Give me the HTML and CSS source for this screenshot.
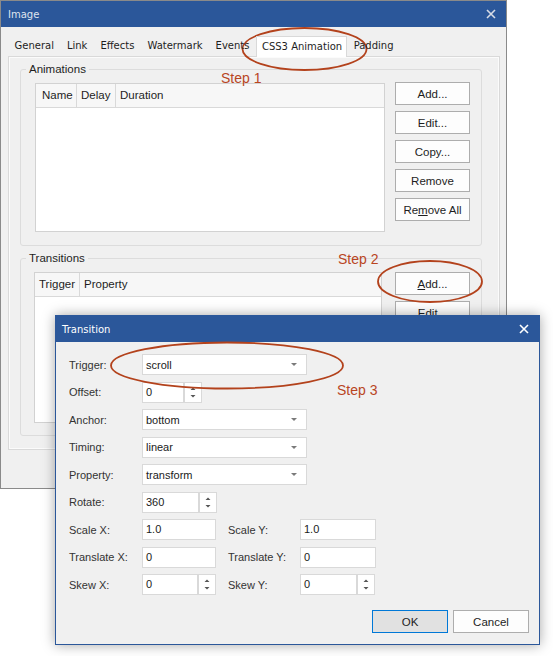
FILE: index.html
```html
<!DOCTYPE html>
<html>
<head>
<meta charset="utf-8">
<link rel="stylesheet" href="styles.css">
</head>
<body>
<div class="desktop">
  <section class="win win-image">
    <header class="titlebar">
      <span class="title">Image</span>
      <svg class="close" width="10" height="10" viewBox="0 0 10 10"><path d="M1 1 L9 9 M9 1 L1 9"/></svg>
    </header>
    <div class="img-body">
      <nav class="tabs">
        <span class="tab">General</span>
        <span class="tab">Link</span>
        <span class="tab">Effects</span>
        <span class="tab">Watermark</span>
        <span class="tab">Events</span>
        <span class="tab active">CSS3 Animation</span>
        <span class="tab">Padding</span>
      </nav>
      <div class="tabpanel">
        <fieldset class="group group-anim">
          <legend>Animations</legend>
          <div class="group-row">
            <div class="listview lv-anim">
              <div class="lv-head">
                <span class="col col-name">Name</span>
                <span class="col col-delay">Delay</span>
                <span class="col col-dur">Duration</span>
              </div>
              <div class="lv-body"></div>
            </div>
            <div class="btncol">
              <button class="btn">Add...</button>
              <button class="btn">Edit...</button>
              <button class="btn">Copy...</button>
              <button class="btn">Remove</button>
              <button class="btn">Re<u>m</u>ove All</button>
            </div>
          </div>
        </fieldset>
        <fieldset class="group group-trans">
          <legend>Transitions</legend>
          <div class="group-row">
            <div class="listview lv-trans">
              <div class="lv-head">
                <span class="col col-trig">Trigger</span>
                <span class="col col-prop">Property</span>
              </div>
              <div class="lv-body"></div>
            </div>
            <div class="btncol">
              <button class="btn"><u>A</u>dd...</button>
              <button class="btn">Edit...</button>
              <button class="btn">Remove</button>
              <button class="btn">Remove All</button>
            </div>
          </div>
        </fieldset>
      </div>
    </div>
  </section>

  <section class="win win-trans">
    <header class="titlebar">
      <span class="title">Transition</span>
      <svg class="close" width="10" height="10" viewBox="0 0 10 10"><path d="M1 1 L9 9 M9 1 L1 9"/></svg>
    </header>
    <div class="trans-body">
      <div class="form">
        <span class="lbl">Trigger:</span>
        <div class="combo"><span>scroll</span><i class="caret"></i></div>

        <span class="lbl">Offset:</span>
        <div class="spin spin-short">
          <span class="field">0</span>
          <span class="arrows"><svg width="16" height="19" viewBox="0 0 16 19"><path d="M5.5 7 L8 4.5 L10.5 7Z M5.5 12 L8 14.5 L10.5 12Z"/></svg></span>
        </div>

        <span class="lbl">Anchor:</span>
        <div class="combo"><span>bottom</span><i class="caret"></i></div>

        <span class="lbl">Timing:</span>
        <div class="combo"><span>linear</span><i class="caret"></i></div>

        <span class="lbl">Property:</span>
        <div class="combo"><span>transform</span><i class="caret"></i></div>

        <span class="lbl">Rotate:</span>
        <div class="spin">
          <span class="field">360</span>
          <span class="arrows"><svg width="16" height="19" viewBox="0 0 16 19"><path d="M5.5 7 L8 4.5 L10.5 7Z M5.5 12 L8 14.5 L10.5 12Z"/></svg></span>
        </div>

        <span class="lbl">Scale X:</span>
        <span class="field">1.0</span>
        <span class="lbl lbl2">Scale Y:</span>
        <span class="field">1.0</span>

        <span class="lbl">Translate X:</span>
        <span class="field">0</span>
        <span class="lbl lbl2">Translate Y:</span>
        <span class="field">0</span>

        <span class="lbl">Skew X:</span>
        <div class="spin spin-cell">
          <span class="field">0</span>
          <span class="arrows"><svg width="16" height="19" viewBox="0 0 16 19"><path d="M5.5 7 L8 4.5 L10.5 7Z M5.5 12 L8 14.5 L10.5 12Z"/></svg></span>
        </div>
        <span class="lbl lbl2">Skew Y:</span>
        <div class="spin spin-cell">
          <span class="field">0</span>
          <span class="arrows"><svg width="16" height="19" viewBox="0 0 16 19"><path d="M5.5 7 L8 4.5 L10.5 7Z M5.5 12 L8 14.5 L10.5 12Z"/></svg></span>
        </div>
      </div>
      <div class="dlg-buttons">
        <button class="btn btn-default">OK</button>
        <button class="btn">Cancel</button>
      </div>
    </div>
  </section>

  <svg class="annot" width="553" height="656" viewBox="0 0 553 656">
    <ellipse cx="304.5" cy="49" rx="62" ry="21"/>
    <ellipse cx="430" cy="281.5" rx="52" ry="20.5"/>
    <ellipse cx="227" cy="365.5" rx="116" ry="23"/>
  </svg>
  <span class="step step1">Step 1</span>
  <span class="step step2">Step 2</span>
  <span class="step step3">Step 3</span>
</div>
</body>
</html>
```

FILE: styles.css
```css
* { box-sizing: border-box; }

body {
  margin: 0;
  background: #ffffff;
  font-family: "Liberation Sans", sans-serif;
  font-size: 11px;
  color: #1e1e1e;
}

.desktop {
  position: relative;
  width: 553px;
  height: 656px;
  overflow: hidden;
}

/* windows */
.win {
  position: absolute;
  display: flex;
  flex-direction: column;
  background: #f0f0f0;
}
.win-image {
  left: 0;
  top: 0;
  width: 507px;
  height: 489px;
  border: 1px solid #8a8a8a;
}
.win-trans {
  left: 55px;
  top: 315px;
  width: 485px;
  height: 330px;
  border: 1px solid #2b579a;
  box-shadow: 0 0 12px rgba(0, 0, 0, 0.35);
}

.titlebar {
  flex: none;
  height: 26px;
  background: #2b579a;
  display: flex;
  align-items: center;
  justify-content: space-between;
  font-family: "DejaVu Sans", sans-serif;
  font-size: 10px;
}
.win-image .titlebar {
  padding: 0 10px 0 7px;
  color: #dfe4ee;
}
.win-image .close path { stroke: #d8dce6; }
.win-trans .titlebar {
  padding: 0 10px 0 6px;
  color: #ffffff;
}
.close path {
  stroke: #ffffff;
  stroke-width: 1.6;
  fill: none;
}

/* Image window body */
.img-body {
  padding: 9px 6px 0 7px;
}
.tabs {
  display: flex;
  height: 20px;
  font-family: "DejaVu Sans", sans-serif;
  font-size: 10px;
  color: #1e1e1e;
  position: relative;
  z-index: 1;
}
.tab {
  padding: 0 6.5px;
  line-height: 20px;
  white-space: nowrap;
}
.tab.active {
  background: #ffffff;
  border: 1px solid #d9d9d9;
  border-bottom: none;
  padding: 0 4px 0 5px;
  height: 21px;
  line-height: 19px;
}
.tabpanel {
  border: 1px solid #d9d9d9;
  box-shadow: inset 0 0 0 1px #fbfbfb;
  padding: 5px 17px 13px 11px;
  display: flex;
  flex-direction: column;
  gap: 5px;
}

.group {
  margin: 0;
  min-width: 0;
  border: 1px solid #dcdcdc;
  border-radius: 3px;
}
.group legend {
  padding: 0 3px;
  line-height: 14px;
  font-size: 11.5px;
  color: #1e1e1e;
}
.group-anim { padding: 6px 11px 13px 14px; }
.group-anim legend { margin-left: -9px; }
.group-trans { padding: 7px 11px 12px 13px; }
.group-trans legend { margin-left: -8px; }

.group-row {
  display: flex;
  align-items: flex-start;
}
.group-anim .group-row { gap: 10px; }
.group-trans .group-row { gap: 13px; }

.listview {
  flex: 1;
  background: #ffffff;
  border: 1px solid #d2d2d2;
  display: flex;
  flex-direction: column;
}
.lv-anim { height: 149px; margin-top: 1px; }
.lv-trans { height: 151px; }
.lv-head {
  display: flex;
  height: 24px;
  flex: none;
  border-bottom: 1px solid #d9d9d9;
  background: #f7f7f7;
  font-size: 11.5px;
}
.col {
  line-height: 23px;
  padding-left: 6px;
  border-right: 1px solid #d9d9d9;
  white-space: nowrap;
}
.col-name { width: 41px; }
.col-delay { width: 39px; padding-left: 4px; }
.col-dur { flex: 1; border-right: none; padding-left: 4px; }
.col-trig { width: 45px; padding-left: 4px; }
.col-prop { flex: 1; border-right: none; padding-left: 4px; }
.lv-body { flex: 1; }

.btncol {
  flex: none;
  display: flex;
  flex-direction: column;
  gap: 6px;
}

.btn {
  width: 75px;
  height: 23px;
  padding: 0;
  margin: 0;
  border: 1px solid #adadad;
  background: #fdfdfd;
  color: #1e1e1e;
  font: inherit;
  font-size: 11.5px;
  display: flex;
  align-items: center;
  justify-content: center;
  white-space: nowrap;
}
.btn u { text-underline-offset: 1px; }

/* Transition dialog body */
.trans-body {
  padding: 12px 10px 11px 13px;
  display: flex;
  flex-direction: column;
  flex: 1;
}
.form {
  display: grid;
  grid-template-columns: 73px 74px 84px 76px;
  grid-auto-rows: 21px;
  row-gap: 6.5px;
  align-items: center;
}
.lbl {
  color: #333333;
  white-space: nowrap;
}
.lbl2 { padding-left: 12px; }

.field {
  display: block;
  height: 21px;
  background: #ffffff;
  border: 1px solid #d9d9d9;
  padding-left: 3px;
  line-height: 19px;
  color: #1a1a1a;
}
.combo {
  grid-column: 2 / span 3;
  width: 165px;
  height: 21px;
  background: #ffffff;
  border: 1px solid #d9d9d9;
  padding: 0 9px 0 3px;
  display: flex;
  align-items: center;
  justify-content: space-between;
  color: #1a1a1a;
}
.caret {
  width: 0;
  height: 0;
  border-left: 3px solid transparent;
  border-right: 3px solid transparent;
  border-top: 3px solid #7a7a7a;
}

.spin {
  grid-column: 2 / span 3;
  display: flex;
  height: 21px;
}
.spin-cell { grid-column: auto; }
.spin .field { width: 57px; }
.spin-short .field { width: 42px; }
.arrows {
  width: 18px;
  height: 21px;
  background: #ffffff;
  border: 1px solid #d9d9d9;
  display: flex;
  align-items: center;
  justify-content: center;
}
.arrows path { fill: #555555; }

.dlg-buttons {
  margin-top: auto;
  display: flex;
  justify-content: flex-end;
  gap: 5px;
}
.dlg-buttons .btn { width: 76px; }
.btn-default {
  background: #e1e1e1;
  border-color: #0078d7;
}

/* annotations */
.annot {
  position: absolute;
  left: 0;
  top: 0;
  pointer-events: none;
}
.annot ellipse {
  fill: none;
  stroke: #b3421c;
  stroke-width: 1.8;
}
.step {
  position: absolute;
  font-family: "Liberation Sans", sans-serif;
  font-size: 14px;
  line-height: 16px;
  color: #b9451f;
}
.step1 { left: 221px; top: 70px; }
.step2 { left: 338px; top: 251px; }
.step3 { left: 337px; top: 382px; }
```
